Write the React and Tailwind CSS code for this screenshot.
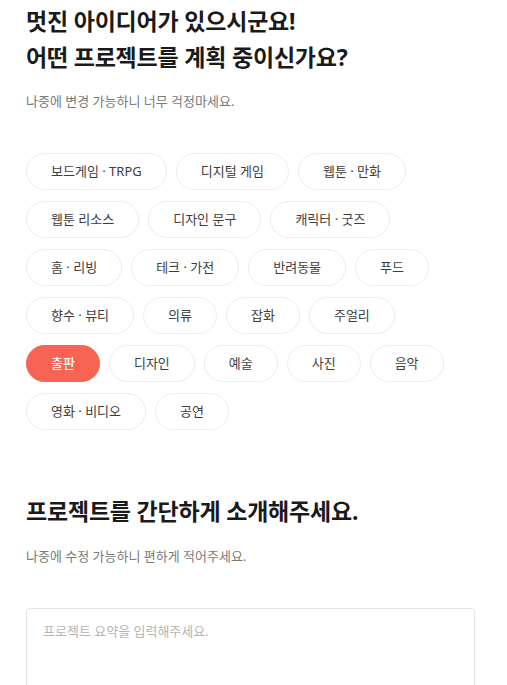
const CATEGORIES = [
  '보드게임 · TRPG',
  '디지털 게임',
  '웹툰 · 만화',
  '웹툰 리소스',
  '디자인 문구',
  '캐릭터 · 굿즈',
  '홈 · 리빙',
  '테크 · 가전',
  '반려동물',
  '푸드',
  '향수 · 뷰티',
  '의류',
  '잡화',
  '주얼리',
  '출판',
  '디자인',
  '예술',
  '사진',
  '음악',
  '영화 · 비디오',
  '공연',
]

export default function App() {
  const selected = '출판'
  return (
    <div className="bg-white px-[26px] pt-[3px] pb-10 font-['Noto_Sans','Noto_Sans_CJK_KR',sans-serif] text-[#1a1a1a]">
      <h1 className="text-[23px] font-bold leading-[36px] tracking-[-0.2px]">
        멋진 아이디어가 있으시군요!
        <br />
        어떤 프로젝트를 계획 중이신가요?
      </h1>
      <p className="mt-[16px] text-[13px] leading-[20px] text-[#7a7a7a]">
        나중에 변경 가능하니 너무 걱정마세요.
      </p>

      <div className="mt-[42px] flex w-[420px] flex-wrap gap-x-[9px] gap-y-[11px]">
        {CATEGORIES.map((c) => (
          <button
            key={c}
            className={`h-[37px] min-w-[73px] rounded-full border px-6 text-[13px] ${
              c === selected
                ? 'border-[#f86453] bg-[#f86453] font-medium text-white'
                : 'border-[#ececec] bg-white text-[#3d3d3d]'
            }`}
          >
            {c}
          </button>
        ))}
      </div>

      <h2 className="mt-[63px] text-[23px] font-bold leading-[36px] tracking-[-0.2px]">
        프로젝트를 간단하게 소개해주세요.
      </h2>
      <p className="mt-[17px] text-[13px] leading-[20px] text-[#7a7a7a]">
        나중에 수정 가능하니 편하게 적어주세요.
      </p>

      <textarea
        placeholder="프로젝트 요약을 입력해주세요."
        className="mt-[42px] block h-[140px] w-[449px] resize-none rounded-[4px] border border-[#e4e4e4] px-4 py-[12px] text-[13px] leading-[20px] outline-none placeholder:text-[#b5b5b5]"
      />
    </div>
  )
}
